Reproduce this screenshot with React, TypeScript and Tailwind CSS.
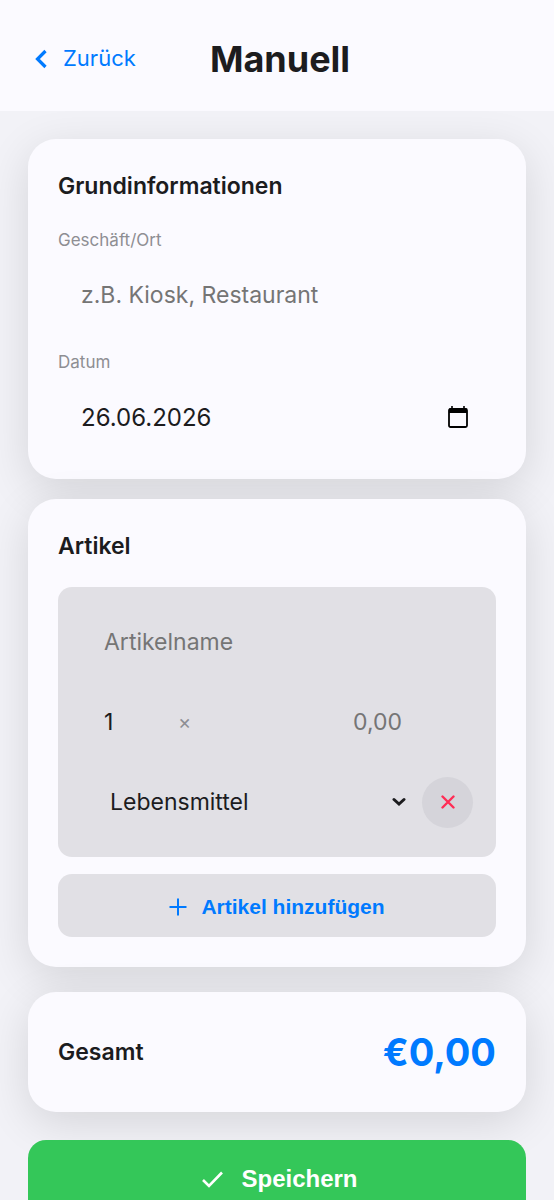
import { useState } from "react";
import type { ReactNode } from "react";

const CATEGORIES = ["Lebensmittel", "Getränke", "Haushalt", "Sonstiges"];

const inputClass =
  "h-16 min-w-0 bg-transparent px-[23px] text-[#1c1c1e] outline-none placeholder:text-[#757575]";

const Card = ({ children, className = "" }: { children: ReactNode; className?: string }) => (
  <section
    className={`rounded-[28px] bg-[#fbfaff] p-[30px] shadow-[0_11px_45px_rgba(0,0,0,0.12)] ${className}`}
  >
    {children}
  </section>
);

const CardTitle = ({ children }: { children: ReactNode }) => (
  <h2 className="mb-6 text-[23px] leading-[34px] font-semibold text-[#1c1c1e]">{children}</h2>
);

const Header = () => (
  <header className="grid h-[111px] grid-cols-[1fr_auto_1fr] items-center gap-4 bg-[#fbfaff] pt-[6px] pr-7 pl-[34px]">
    <a href="#" className="flex items-center gap-4 text-[22px] text-[#007aff]">
      <svg width="13" height="20" viewBox="0 0 13 20" fill="none" aria-hidden="true">
        <path d="M11.5 2 3.5 10l8 8" stroke="currentColor" strokeWidth="3.2" />
      </svg>
      Zurück
    </a>
    <h1 className="text-[36px] leading-[48px] font-bold text-[#1c1c1e]">Manuell</h1>
  </header>
);

const ItemEditor = () => {
  const [category, setCategory] = useState(CATEGORIES[0]);

  return (
    <div className="flex flex-col gap-4 rounded-[14px] bg-[#e1e0e5] p-[23px] text-[23px]">
      <input className={inputClass} aria-label="Artikelname" placeholder="Artikelname" />

      <div className="flex items-center gap-3 pr-12">
        <input className={`${inputClass} w-[85px]`} aria-label="Menge" defaultValue="1" />
        <span className="text-[20px] text-[#8e8e93]">×</span>
        <input
          className={`${inputClass} flex-1 text-right`}
          aria-label="Preis"
          inputMode="decimal"
          placeholder="0,00"
        />
      </div>

      <div className="flex items-center gap-3">
        <div className="relative flex-1">
          <select
            className="h-16 w-full appearance-none bg-transparent pr-8 pl-[29px] text-[#1c1c1e] outline-none"
            aria-label="Kategorie"
            value={category}
            onChange={(e) => setCategory(e.target.value)}
          >
            {CATEGORIES.map((name) => (
              <option key={name}>{name}</option>
            ))}
          </select>
          <svg
            className="pointer-events-none absolute inset-y-0 right-1 my-auto text-[#1c1c1e]"
            width="14"
            height="10"
            viewBox="0 0 14 10"
            fill="none"
            aria-hidden="true"
          >
            <path
              d="M2 2.500 7 7l5-4.500"
              stroke="currentColor"
              strokeWidth="3"
              strokeLinecap="round"
            />
          </svg>
        </div>
        <button
          type="button"
          aria-label="Artikel entfernen"
          className="flex size-[51px] items-center justify-center rounded-full bg-[#d5d4da] text-[#ff2d55]"
        >
          <svg width="14" height="14" viewBox="0 0 14 14" fill="none" aria-hidden="true">
            <path
              d="m1.500 1.500 11 11M12.500 1.500l-11 11"
              stroke="currentColor"
              strokeWidth="2.400"
              strokeLinecap="round"
            />
          </svg>
        </button>
      </div>
    </div>
  );
};

export default function App() {
  return (
    <div className="min-h-screen bg-[#f2f2f7] font-['Inter',sans-serif]">
      <Header />

      <main className="px-7 pt-7 pb-10">
        <Card>
          <CardTitle>Grundinformationen</CardTitle>
          <div className="flex flex-col">
            <label htmlFor="shop" className="mb-[10px] text-[17px] leading-[26px] text-[#8e8e93]">
              Geschäft/Ort
            </label>
            <input
              id="shop"
              className={`${inputClass} text-[23px]`}
              placeholder="z.B. Kiosk, Restaurant"
            />
          </div>
          <div className="mt-[22px] flex flex-col">
            <label htmlFor="date" className="mb-[10px] text-[17px] leading-[26px] text-[#8e8e93]">
              Datum
            </label>
            <div className="flex items-center pr-7">
              <input
                id="date"
                className={`${inputClass} flex-1 text-[24px]`}
                defaultValue="26.06.2026"
              />
              <button type="button" aria-label="Kalender öffnen" className="text-black">
                <svg width="20" height="22" viewBox="0 0 20 22" fill="none" aria-hidden="true">
                  <path d="M4 0v3M16 0v3" stroke="currentColor" strokeWidth="1.600" />
                  <rect x="1" y="3" width="18" height="18" rx="1.500" stroke="currentColor" strokeWidth="1.800" />
                  <path d="M1 2.500h18V7H1z" fill="currentColor" />
                </svg>
              </button>
            </div>
          </div>
        </Card>

        <Card className="mt-5">
          <CardTitle>Artikel</CardTitle>
          <ItemEditor />
          <button
            type="button"
            className="mt-[17px] flex h-[63px] w-full items-center justify-center gap-[14px] rounded-[14px] bg-[#e1e0e5] pt-[2px] font-['Liberation_Sans',sans-serif] text-[21px] font-bold text-[#007aff]"
          >
            <svg width="18" height="18" viewBox="0 0 18 18" fill="none" aria-hidden="true">
              <path d="M9 .5v17M.5 9h17" stroke="currentColor" strokeWidth="2" />
            </svg>
            Artikel hinzufügen
          </button>
        </Card>

        <Card className="mt-[25px] flex items-center justify-between">
          <span className="text-[23px] leading-[34px] font-semibold text-[#1c1c1e]">Gesamt</span>
          <span className="text-[38px] leading-[60px] font-bold text-[#007aff]">€0,00</span>
        </Card>

        <button
          type="button"
          className="mt-7 flex h-[78px] w-full items-center justify-center gap-[18px] rounded-[18px] bg-[#34c759] pl-[6px] font-['Liberation_Sans',sans-serif] text-[24px] font-bold text-white"
        >
          <svg width="21" height="17" viewBox="0 0 21 17" fill="none" aria-hidden="true">
            <path d="m1 9 6 6L20 1.500" stroke="currentColor" strokeWidth="2.600" />
          </svg>
          Speichern
        </button>
      </main>
    </div>
  );
}
